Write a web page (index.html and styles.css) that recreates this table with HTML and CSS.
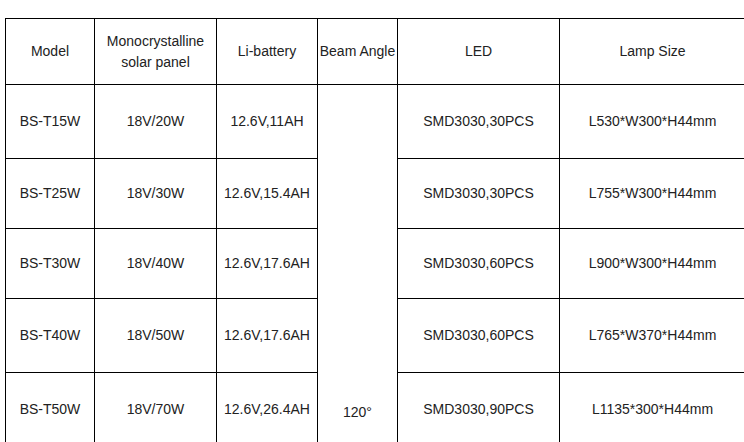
FILE: index.html
```html
<!DOCTYPE html>
<html lang="en">
<head>
<meta charset="utf-8">
<title>Specifications</title>
<link rel="stylesheet" href="styles.css">
</head>
<body>
<table class="spec">
  <colgroup>
    <col class="c-model">
    <col class="c-panel">
    <col class="c-battery">
    <col class="c-beam">
    <col class="c-led">
    <col class="c-size">
  </colgroup>
  <tbody>
    <tr class="row-head">
      <td>Model</td>
      <td>Monocrystalline<br>solar panel</td>
      <td>Li-battery</td>
      <td class="beam-head">Beam Angle</td>
      <td>LED</td>
      <td>Lamp Size</td>
    </tr>
    <tr class="row-tall">
      <td>BS-T15W</td>
      <td>18V/20W</td>
      <td>12.6V,11AH</td>
      <td class="beam" rowspan="5">120°</td>
      <td>SMD3030,30PCS</td>
      <td>L530*W300*H44mm</td>
    </tr>
    <tr class="row-short">
      <td>BS-T25W</td>
      <td>18V/30W</td>
      <td>12.6V,15.4AH</td>
      <td>SMD3030,30PCS</td>
      <td>L755*W300*H44mm</td>
    </tr>
    <tr class="row-short">
      <td>BS-T30W</td>
      <td>18V/40W</td>
      <td>12.6V,17.6AH</td>
      <td>SMD3030,60PCS</td>
      <td>L900*W300*H44mm</td>
    </tr>
    <tr class="row-tall">
      <td>BS-T40W</td>
      <td>18V/50W</td>
      <td>12.6V,17.6AH</td>
      <td>SMD3030,60PCS</td>
      <td>L765*W370*H44mm</td>
    </tr>
    <tr class="row-tall">
      <td>BS-T50W</td>
      <td>18V/70W</td>
      <td>12.6V,26.4AH</td>
      <td>SMD3030,90PCS</td>
      <td>L1135*300*H44mm</td>
    </tr>
  </tbody>
</table>
</body>
</html>
```

FILE: styles.css
```css
html {
  overflow: hidden;
  background: #fff;
}

body {
  margin: 0;
  padding: 18px 0 0 5px;
  font-family: "Liberation Sans", Arial, sans-serif;
  font-size: 14px;
  line-height: 21px;
  color: #222;
}

.spec {
  border-collapse: collapse;
  table-layout: fixed;
  width: 741px;
}

.spec td {
  border: 1px solid #000;
  padding: 0;
  text-align: center;
  vertical-align: middle;
}

.c-model { width: 89px; }
.c-panel { width: 122px; }
.c-battery { width: 101px; }
.c-beam { width: 80px; }
.c-led { width: 162px; }
.c-size { width: 186px; }

.row-head td { height: 65px; }
.row-tall td { height: 73px; }
.row-short td { height: 69px; }

.spec td.beam-head {
  white-space: nowrap;
}

.spec td.beam {
  height: auto;
  vertical-align: bottom;
  padding-bottom: 23px;
}
```
